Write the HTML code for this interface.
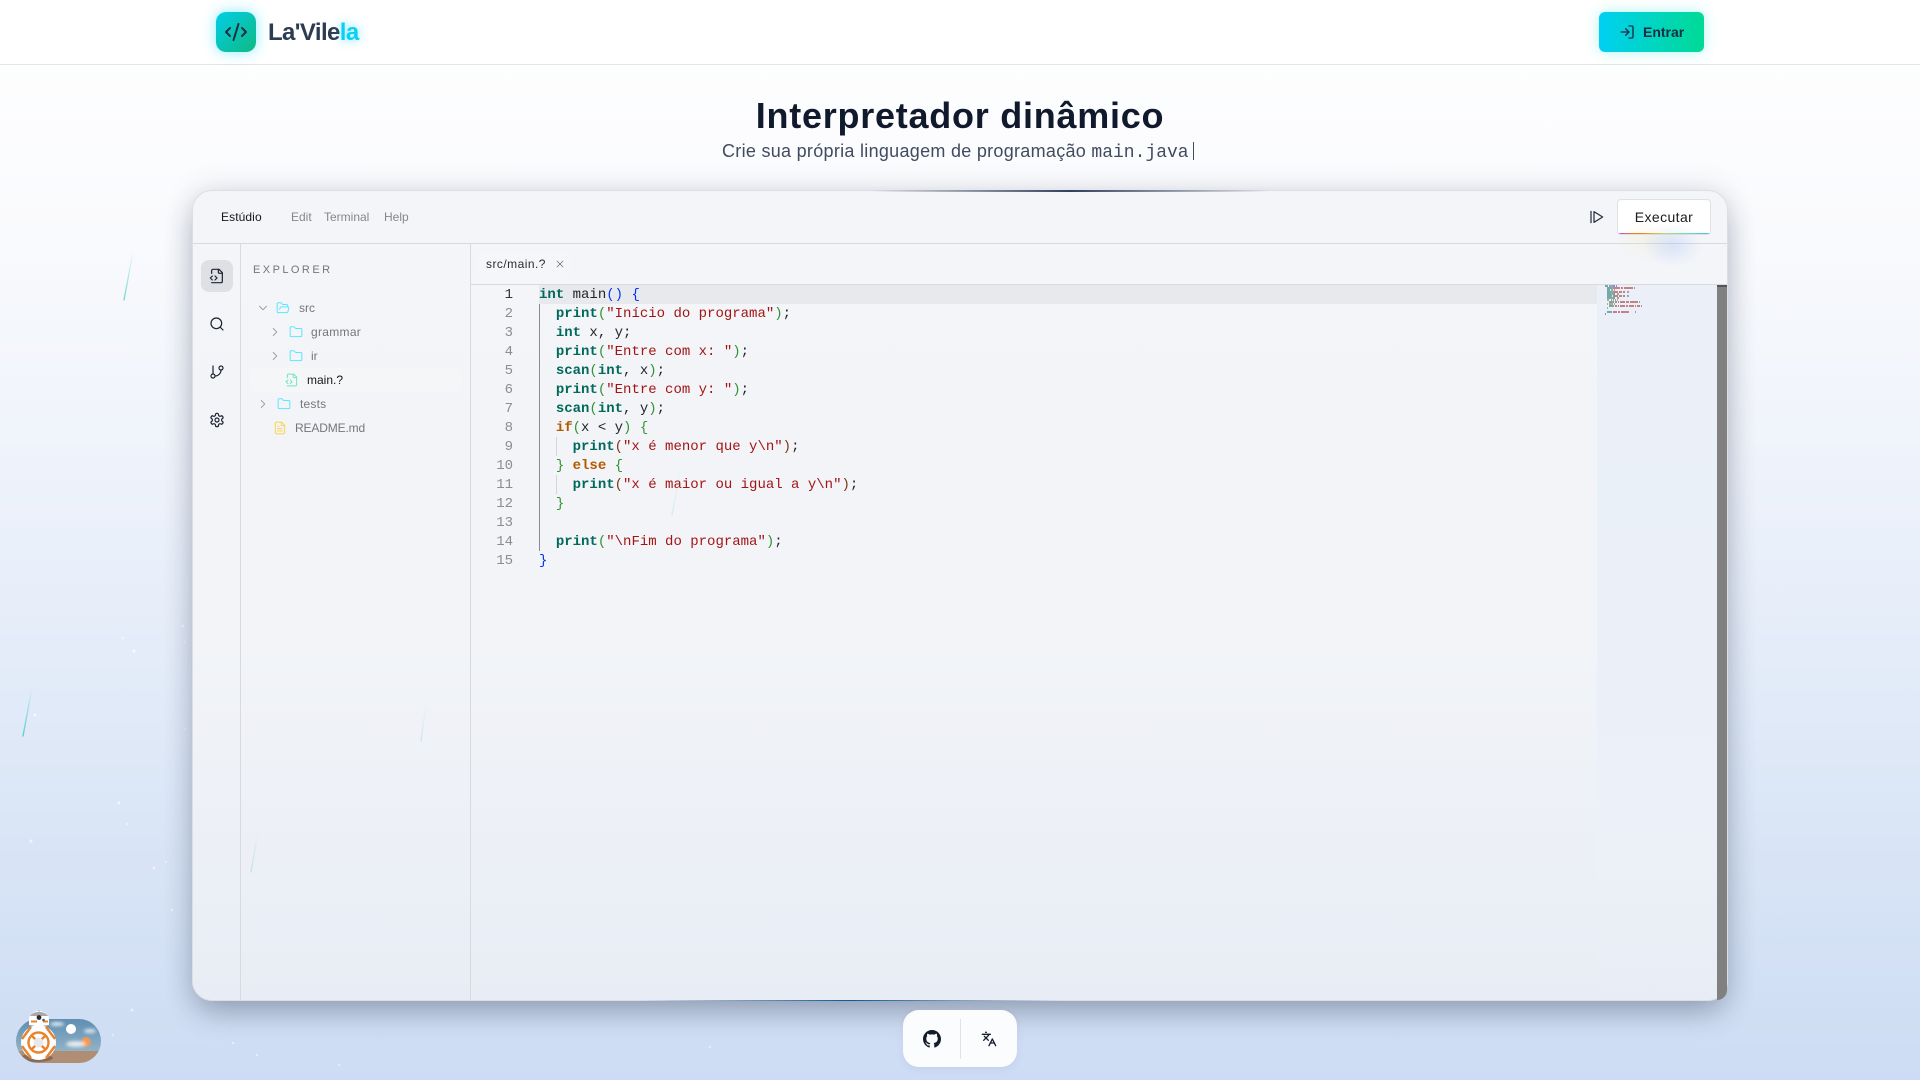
<!DOCTYPE html>
<html lang="pt-BR">
<head>
<meta charset="utf-8">
<title>La'Vilela</title>
<style>
*{box-sizing:border-box}
html,body{margin:0;padding:0;width:1920px;height:1080px;overflow:hidden}
body{position:relative;font-family:"Liberation Sans",sans-serif;background:linear-gradient(180deg,#fff 0%,#f9fafd 22%,#f0f4fb 40%,#e5edf9 58%,#d9e5f6 78%,#cddcf4 100%)}
.a{position:absolute}
svg.i{position:absolute;fill:none;stroke:currentColor;stroke-width:2;stroke-linecap:round;stroke-linejoin:round}
header{position:absolute;left:0;top:0;width:1920px;height:65px;background:rgba(255,255,255,.7);border-bottom:1px solid #e3e5e8}
.logo{left:216px;top:12px;width:40px;height:40px;border-radius:10px;background:linear-gradient(135deg,#00cfe8,#10b981);box-shadow:0 0 14px rgba(0,212,255,.45)}
.brand{left:268px;top:18px;font-size:24px;line-height:30px;font-weight:700;letter-spacing:-.6px;color:#2d3b53}
.brand span{color:#0ccff5;text-shadow:0 0 10px rgba(0,212,255,.6)}
.entrar{left:1599px;top:12px;width:105px;height:40px;border-radius:6px;background:linear-gradient(90deg,#00d0f2,#00da94);box-shadow:0 0 14px rgba(0,220,220,.3)}
.entrar b{position:absolute;left:44px;top:11px;font-size:14px;line-height:18px;color:#1e2b40}
h1{position:absolute;left:0;top:93px;width:1920px;margin:0;text-align:center;font-size:36px;line-height:46px;font-weight:700;color:#111a2c;letter-spacing:.75px}
.sub{position:absolute;left:722px;top:140px;font-size:18px;line-height:22px;color:#414b60;white-space:pre}
.sub span{letter-spacing:.29px}
.sub code{font-family:"Liberation Mono",monospace;font-size:18px;color:#414b60}
.sub i{position:absolute;left:471px;top:2px;width:1px;height:18px;background:#414b60}
.win{left:192px;top:190px;width:1536px;height:811px;border-radius:20px;border:1px solid #dcdee2;background:linear-gradient(180deg,#f4f5f8 0%,#f2f4f8 55%,#e8edf5 100%);box-shadow:0 14px 30px -4px rgba(20,30,50,.3),0 0 30px rgba(30,50,90,.12);overflow:hidden}
.beam{position:absolute;height:1.5px;z-index:3}
.hl{position:absolute;left:0;top:52px;width:1535px;height:1px;background:#d8dade}
.m{position:absolute;font-size:12px;line-height:16px;color:#84878c;top:18px}
.run{left:1617px;top:199px;width:94px;height:36px;border-radius:4px;background:#fff;border:1px solid #e0e1e4;color:#1a1b1f;font-size:14px;line-height:34px;text-align:center;letter-spacing:.4px;overflow:hidden}
.run u{position:absolute;left:0;right:0;bottom:0;height:1.5px;background:linear-gradient(90deg,#a855f7,#f97316 16%,#f97316 26%,#c9d96f 50%,#6ee7a0 75%,#38bdf8);}
.glow{left:1615px;top:215px;width:115px;height:60px;background:radial-gradient(ellipse 30px 22px at 50% 50%,rgba(110,160,250,.2),transparent),radial-gradient(ellipse 30px 22px at 28% 40%,rgba(240,220,140,.14),transparent);pointer-events:none}
.vl{position:absolute;width:1px;background:#d8dade}
.act{left:201px;top:260px;width:32px;height:32px;border-radius:8px;background:#dfe0e3}
.t{position:absolute;font-size:12px;line-height:16px;color:#73767b;white-space:pre}
.row{left:250px;top:368px;width:211px;height:24px;border-radius:6px;background:rgba(255,255,255,.1)}
.ln{position:absolute;left:480px;width:33px;text-align:right;font:14px/19px "Liberation Mono",monospace;color:#8b8d90}
.c{position:absolute;left:539px;font:14px/19px "Liberation Mono",monospace;color:#1f2328;white-space:pre}
.k{color:#00695c;font-weight:700}
.o{color:#b35a00;font-weight:700}
.s{color:#a31515}
.b{color:#0431fa}
.g{color:#319331}
.r{color:#7b3814}
.dock{left:903px;top:1010px;width:114px;height:57px;border-radius:16px;background:#fbfcfe;box-shadow:0 2px 8px rgba(60,80,120,.08)}
</style>
</head>
<body>

<!-- stars -->
<svg class="a" style="left:0;top:0;opacity:.75" width="1920" height="1080" fill="#fff">
<circle cx="183" cy="626" r="1.4" opacity=".8"/><circle cx="134" cy="651" r="1.5"/><circle cx="123" cy="638" r="1.3" opacity=".5"/><circle cx="35" cy="715" r="1.4" opacity=".9"/><circle cx="119" cy="803" r="1.4" opacity=".9"/><circle cx="127" cy="824" r="1.2" opacity=".7"/><circle cx="31" cy="841" r="1.4" opacity=".9"/><circle cx="154" cy="868" r="1.3" opacity=".8"/><circle cx="166" cy="862" r="1.3" opacity=".5"/><circle cx="172" cy="910" r="1.3" opacity=".6"/><circle cx="185" cy="642" r="1.2" opacity=".5"/><circle cx="185" cy="729" r="1.2" opacity=".5"/><circle cx="132" cy="1010" r="1.3" opacity=".8"/><circle cx="113" cy="1035" r="1.2" opacity=".5"/><circle cx="710" cy="1047" r="1.2" opacity=".6"/><circle cx="233" cy="1043" r="1.2" opacity=".6"/><circle cx="257" cy="1055" r="1.2" opacity=".6"/><circle cx="339" cy="1065" r="1.2" opacity=".6"/><circle cx="112" cy="178" r="1.2" opacity=".7"/><circle cx="29" cy="296" r="1.2" opacity=".7"/><circle cx="138" cy="187" r="1.2" opacity=".5"/><circle cx="1545" cy="125" r="1.2" opacity=".5"/>
</svg>

<header></header>
<div class="a logo"></div>
<svg class="i" style="left:224px;top:20px;color:#1e2b40" width="24" height="24" viewBox="0 0 24 24"><path d="m18 16 4-4-4-4"/><path d="m6 8-4 4 4 4"/><path d="m14.5 4-5 16"/></svg>
<div class="a brand">La'Vile<span>la</span></div>
<div class="a entrar"><svg class="i" style="left:20px;top:12px;color:#1e2b40" width="16" height="16" viewBox="0 0 24 24"><path d="M15 3h4a2 2 0 0 1 2 2v14a2 2 0 0 1-2 2h-4"/><path d="m10 17 5-5-5-5"/><path d="M15 12H3"/></svg><b>Entrar</b></div>

<h1>Interpretador dinâmico</h1>
<div class="sub"><span>Crie sua própria linguagem de programação </span><code>main.java</code><i></i></div>

<div class="a win">
  <div class="hl"></div>
  <div class="hl" style="top:93px;left:278px;width:1257px"></div>
  <div class="vl" style="left:47px;top:52px;height:760px"></div>
  <div class="vl" style="left:277px;top:52px;height:760px"></div>
  <div class="m" style="left:28px;color:#16171a;letter-spacing:.1px">Estúdio</div>
  <div class="m" style="left:98px">Edit</div>
  <div class="m" style="left:131px">Terminal</div>
  <div class="m" style="left:191px">Help</div>
</div>
<div class="beam" style="left:870px;top:190px;width:400px;background:linear-gradient(90deg,rgba(50,65,90,0),#32415a 50%,rgba(50,65,90,0))"></div>
<div class="beam" style="left:640px;top:999.5px;width:420px;background:linear-gradient(90deg,rgba(10,90,140,0),#0d5c8f 50%,rgba(10,90,140,0))"></div>

<!-- toolbar -->
<svg class="i" style="left:1588px;top:209px;color:#2a3344;stroke-width:1.9" width="16" height="16" viewBox="0 0 24 24"><path d="M4.5 3.5v17"/><path d="M9 4v16l13-8z"/></svg>
<div class="a run">Executar<u></u></div>
<div class="a glow"></div>

<!-- activity bar -->
<div class="a act"></div>
<svg class="i" style="left:209px;top:268px;color:#1c2230;stroke-width:1.8" width="16" height="16" viewBox="0 0 24 24"><path d="M4 22h14a2 2 0 0 0 2-2V7l-5-5H6a2 2 0 0 0-2 2v4"/><path d="M14 2v4a2 2 0 0 0 2 2h4"/><path d="m5 12-3 3 3 3"/><path d="m9 18 3-3-3-3"/></svg>
<svg class="i" style="left:209px;top:316px;color:#1c2230;stroke-width:1.8" width="16" height="16" viewBox="0 0 24 24"><circle cx="11" cy="11" r="8"/><path d="m21 21-4.3-4.3"/></svg>
<svg class="i" style="left:209px;top:364px;color:#1c2230;stroke-width:1.8" width="16" height="16" viewBox="0 0 24 24"><path d="M6 3v12"/><circle cx="18" cy="6" r="3"/><circle cx="6" cy="18" r="3"/><path d="M18 9a9 9 0 0 1-9 9"/></svg>
<svg class="i" style="left:209px;top:412px;color:#1c2230;stroke-width:1.8" width="16" height="16" viewBox="0 0 24 24"><path d="M12.22 2h-.44a2 2 0 0 0-2 2v.18a2 2 0 0 1-1 1.73l-.43.25a2 2 0 0 1-2 0l-.15-.08a2 2 0 0 0-2.73.73l-.22.38a2 2 0 0 0 .73 2.73l.15.1a2 2 0 0 1 1 1.72v.51a2 2 0 0 1-1 1.74l-.15.09a2 2 0 0 0-.73 2.73l.22.38a2 2 0 0 0 2.73.73l.15-.08a2 2 0 0 1 2 0l.43.25a2 2 0 0 1 1 1.73V20a2 2 0 0 0 2 2h.44a2 2 0 0 0 2-2v-.18a2 2 0 0 1 1-1.73l.43-.25a2 2 0 0 1 2 0l.15.08a2 2 0 0 0 2.73-.73l.22-.39a2 2 0 0 0-.73-2.73l-.15-.08a2 2 0 0 1-1-1.74v-.5a2 2 0 0 1 1-1.74l.15-.09a2 2 0 0 0 .73-2.73l-.22-.38a2 2 0 0 0-2.73-.73l-.15.08a2 2 0 0 1-2 0l-.43-.25a2 2 0 0 1-1-1.73V4a2 2 0 0 0-2-2z"/><circle cx="12" cy="12" r="3"/></svg>

<!-- explorer -->
<div class="t" style="left:253px;top:262px;font-size:11px;letter-spacing:2.45px">EXPLORER</div>
<div class="a row"></div>
<svg class="i" style="left:256px;top:301px;color:#9a9da2;stroke-width:1.6" width="14" height="14" viewBox="0 0 24 24"><path d="m6 9 6 6 6-6"/></svg>
<svg class="i" style="left:276px;top:301px;color:#5ce5ff;stroke-width:1.7" width="14" height="14" viewBox="0 0 24 24"><path d="m6 14 1.5-2.9A2 2 0 0 1 9.24 10H20a2 2 0 0 1 1.94 2.5l-1.54 6a2 2 0 0 1-1.95 1.5H4a2 2 0 0 1-2-2V5a2 2 0 0 1 2-2h3.9a2 2 0 0 1 1.69.9l.81 1.2a2 2 0 0 0 1.67.9H18a2 2 0 0 1 2 2v2"/></svg>
<div class="t" style="left:299px;top:300px">src</div>
<svg class="i" style="left:268px;top:325px;color:#9a9da2;stroke-width:1.6" width="14" height="14" viewBox="0 0 24 24"><path d="m9 18 6-6-6-6"/></svg>
<svg class="i" style="left:289px;top:325px;color:#5ce5ff;stroke-width:1.7" width="14" height="14" viewBox="0 0 24 24"><path d="M20 20a2 2 0 0 0 2-2V8a2 2 0 0 0-2-2h-7.9a2 2 0 0 1-1.69-.9L9.6 3.9A2 2 0 0 0 7.93 3H4a2 2 0 0 0-2 2v13a2 2 0 0 0 2 2Z"/></svg>
<div class="t" style="left:311px;top:324px;letter-spacing:.3px">grammar</div>
<svg class="i" style="left:268px;top:349px;color:#9a9da2;stroke-width:1.6" width="14" height="14" viewBox="0 0 24 24"><path d="m9 18 6-6-6-6"/></svg>
<svg class="i" style="left:289px;top:349px;color:#5ce5ff;stroke-width:1.7" width="14" height="14" viewBox="0 0 24 24"><path d="M20 20a2 2 0 0 0 2-2V8a2 2 0 0 0-2-2h-7.9a2 2 0 0 1-1.69-.9L9.6 3.9A2 2 0 0 0 7.93 3H4a2 2 0 0 0-2 2v13a2 2 0 0 0 2 2Z"/></svg>
<div class="t" style="left:311px;top:348px">ir</div>
<svg class="i" style="left:285px;top:373px;color:#6ee7b7;stroke-width:1.7" width="14" height="14" viewBox="0 0 24 24"><path d="M4 22h14a2 2 0 0 0 2-2V7l-5-5H6a2 2 0 0 0-2 2v4"/><path d="M14 2v4a2 2 0 0 0 2 2h4"/><path d="m5 12-3 3 3 3"/><path d="m9 18 3-3-3-3"/></svg>
<div class="t" style="left:307px;top:372px;color:#17181b">main.?</div>
<svg class="i" style="left:256px;top:397px;color:#9a9da2;stroke-width:1.6" width="14" height="14" viewBox="0 0 24 24"><path d="m9 18 6-6-6-6"/></svg>
<svg class="i" style="left:277px;top:397px;color:#5ce5ff;stroke-width:1.7" width="14" height="14" viewBox="0 0 24 24"><path d="M20 20a2 2 0 0 0 2-2V8a2 2 0 0 0-2-2h-7.9a2 2 0 0 1-1.69-.9L9.6 3.9A2 2 0 0 0 7.93 3H4a2 2 0 0 0-2 2v13a2 2 0 0 0 2 2Z"/></svg>
<div class="t" style="left:300px;top:396px;letter-spacing:.2px">tests</div>
<svg class="i" style="left:273px;top:421px;color:#fcd34d;stroke-width:1.7" width="14" height="14" viewBox="0 0 24 24"><path d="M15 2H6a2 2 0 0 0-2 2v16a2 2 0 0 0 2 2h12a2 2 0 0 0 2-2V7Z"/><path d="M14 2v4a2 2 0 0 0 2 2h4"/><path d="M10 9H8"/><path d="M16 13H8"/><path d="M16 17H8"/></svg>
<div class="t" style="left:295px;top:420px;letter-spacing:-.15px">README.md</div>

<!-- tab -->
<div class="a" style="left:478px;top:250px;width:92px;height:30px;border-radius:8px;background:rgba(255,255,255,.15)"></div>
<div class="t" style="left:486px;top:256px;color:#2a2c30;letter-spacing:.45px">src/main.?</div>
<svg class="i" style="left:554px;top:258px;color:#6b6e73;stroke-width:1.5" width="12" height="12" viewBox="0 0 24 24"><path d="M18 6 6 18"/><path d="m6 6 12 12"/></svg>

<!-- editor -->
<div class="a" style="left:539px;top:285px;width:1058px;height:19px;background:#e8e9ec"></div>
<div class="a" style="left:1597px;top:285px;width:120px;height:715px;background:linear-gradient(180deg,#eaeff8 0%,#ebf0f8 60%,rgba(235,240,248,0) 100%)"></div>
<div class="a" style="left:1717px;top:285px;width:10px;height:2px;background:#555"></div>
<div class="a" style="left:1717px;top:287px;width:10px;height:713px;background:#808080;border-radius:0 0 10px 0"></div>
<div class="a" style="left:539px;top:304px;width:1px;height:247px;background:#8a8c90"></div>
<div class="a" style="left:556px;top:437px;width:1px;height:19px;background:#d3d5d9"></div>
<div class="a" style="left:556px;top:475px;width:1px;height:19px;background:#d3d5d9"></div>

<div class="ln" style="top:285.5px;color:#333">1</div>
<div class="ln" style="top:304.5px">2</div>
<div class="ln" style="top:323.5px">3</div>
<div class="ln" style="top:342.5px">4</div>
<div class="ln" style="top:361.5px">5</div>
<div class="ln" style="top:380.5px">6</div>
<div class="ln" style="top:399.5px">7</div>
<div class="ln" style="top:418.5px">8</div>
<div class="ln" style="top:437.5px">9</div>
<div class="ln" style="top:456.5px">10</div>
<div class="ln" style="top:475.5px">11</div>
<div class="ln" style="top:494.5px">12</div>
<div class="ln" style="top:513.5px">13</div>
<div class="ln" style="top:532.5px">14</div>
<div class="ln" style="top:551.5px">15</div>

<div class="c" style="top:285.5px"><span class="k">int</span> main<span class="b">()</span> <span class="b">{</span></div>
<div class="c" style="top:304.5px">  <span class="k">print</span><span class="g">(</span><span class="s">"Início do programa"</span><span class="g">)</span>;</div>
<div class="c" style="top:323.5px">  <span class="k">int</span> x, y;</div>
<div class="c" style="top:342.5px">  <span class="k">print</span><span class="g">(</span><span class="s">"Entre com x: "</span><span class="g">)</span>;</div>
<div class="c" style="top:361.5px">  <span class="k">scan</span><span class="g">(</span><span class="k">int</span>, x<span class="g">)</span>;</div>
<div class="c" style="top:380.5px">  <span class="k">print</span><span class="g">(</span><span class="s">"Entre com y: "</span><span class="g">)</span>;</div>
<div class="c" style="top:399.5px">  <span class="k">scan</span><span class="g">(</span><span class="k">int</span>, y<span class="g">)</span>;</div>
<div class="c" style="top:418.5px">  <span class="o">if</span><span class="g">(</span>x &lt; y<span class="g">)</span> <span class="g">{</span></div>
<div class="c" style="top:437.5px">    <span class="k">print</span><span class="r">(</span><span class="s">"x é menor que y\n"</span><span class="r">)</span>;</div>
<div class="c" style="top:456.5px">  <span class="g">}</span> <span class="o">else</span> <span class="g">{</span></div>
<div class="c" style="top:475.5px">    <span class="k">print</span><span class="r">(</span><span class="s">"x é maior ou igual a y\n"</span><span class="r">)</span>;</div>
<div class="c" style="top:494.5px">  <span class="g">}</span></div>
<div class="c" style="top:532.5px">  <span class="k">print</span><span class="g">(</span><span class="s">"\nFim do programa"</span><span class="g">)</span>;</div>
<div class="c" style="top:551.5px"><span class="b">}</span></div>

<!-- minimap -->
<svg class="a" style="left:1605px;top:285px;opacity:.5" width="44" height="32" fill="none" stroke-width="2">
<path stroke="#00695c" d="M0 1h3M2 3h5M2 5h3M2 7h5M2 9h4M7 9h3M2 11h5M2 13h4M7 13h3M4 17h5M4 21h5M2 27h5"/>
<path stroke="#a31515" d="M8 3h7M16 3h2M19 3h9M8 7h5M14 7h3M18 7h2M8 11h5M14 11h3M18 11h2M10 17h2M13 17h1M15 17h5M21 17h3M25 17h8M10 21h2M13 21h1M15 21h5M21 21h2M24 21h5M30 21h1M32 21h3M8 27h4M13 27h2M16 27h8"/>
<path stroke="#556" d="M4 1h4M6 5h2M9 5h1M29 3h1M22 7h2M12 9h2M22 11h2M12 13h2M6 15h1M8 15h1M10 15h1M34 17h1M36 21h1M30 27h1"/>
<path stroke="#b35a00" d="M2 15h2M4 19h4"/>
<path stroke="#319331" d="M2 19h1M9 19h1M2 23h1M7 3h1M7 7h1M6 9h1M6 13h1M12 15h1"/>
<path stroke="#0431fa" d="M8 1h2M11 1h1M0 29h1"/>
</svg>

<!-- dock -->
<div class="a dock"></div>
<div class="a" style="left:960px;top:1019px;width:1px;height:40px;background:#e0e2e6"></div>
<svg class="a" style="left:923px;top:1030px" width="18" height="18" viewBox="0 0 16 16" fill="#141c2c"><path d="M8 0C3.58 0 0 3.58 0 8c0 3.54 2.29 6.53 5.47 7.59.4.07.55-.17.55-.38 0-.19-.01-.82-.01-1.49-2.01.37-2.53-.49-2.69-.94-.09-.23-.48-.94-.82-1.13-.28-.15-.68-.52-.01-.53.63-.01 1.08.58 1.23.82.72 1.21 1.87.87 2.33.66.07-.52.28-.87.51-1.07-1.78-.2-3.64-.89-3.64-3.95 0-.87.31-1.59.82-2.15-.08-.2-.36-1.02.08-2.12 0 0 .67-.21 2.2.82.64-.18 1.32-.27 2-.27s1.36.09 2 .27c1.53-1.04 2.2-.82 2.2-.82.44 1.1.16 1.92.08 2.12.51.56.82 1.27.82 2.15 0 3.07-1.87 3.75-3.65 3.95.29.25.54.73.54 1.48 0 1.07-.01 1.93-.01 2.2 0 .21.15.46.55.38A8.013 8.013 0 0 0 16 8c0-4.42-3.58-8-8-8z"/></svg>
<svg class="i" style="left:981px;top:1031px;color:#141c2c;stroke-width:2" width="16" height="16" viewBox="0 0 24 24"><path d="m5 8 6 6"/><path d="m4 14 6-6 2-3"/><path d="M2 5h12"/><path d="M7 2h1"/><path d="m22 22-5-10-5 10"/><path d="M14 18h6"/></svg>

<!-- BB-8 toggle -->
<svg class="a" style="left:0;top:1000px" width="110" height="75" viewBox="0 0 110 75">
<defs>
<clipPath id="p"><rect x="16" y="19" width="85" height="44" rx="22"/></clipPath>
<linearGradient id="sky" x1="0" y1="0" x2="0" y2="1"><stop offset="0" stop-color="#5e8eb2"/><stop offset="1" stop-color="#a3bfd0"/></linearGradient>
<filter id="bl"><feGaussianBlur stdDeviation="1.6"/></filter>
<filter id="bs"><feGaussianBlur stdDeviation=".5"/></filter>
</defs>
<g clip-path="url(#p)">
<rect x="16" y="19" width="85" height="44" fill="url(#sky)"/>
<rect x="16" y="51" width="85" height="12" fill="#b08e74"/>
<circle cx="86" cy="42" r="5" fill="#ee9a5a" filter="url(#bs)"/>
<g fill="#f4f7fa" opacity=".85" filter="url(#bl)"><ellipse cx="76" cy="44" rx="10" ry="3"/><ellipse cx="57" cy="24" rx="7" ry="2"/><ellipse cx="90" cy="31" rx="6" ry="2"/></g>
<circle cx="71" cy="29" r="5" fill="#fff"/>
<ellipse cx="36" cy="58" rx="17" ry="4" fill="#7d6553" opacity=".8"/>
</g>
<circle cx="38.5" cy="42.5" r="17.5" fill="#fff"/>
<g fill="none" stroke="#e8832c" stroke-width="2.4">
<circle cx="38.5" cy="42.5" r="10"/>
<path d="M31 27l-9 12M46 27l9 12M31 58l-9-12M46 58l9-12"/>
<path d="M32 36l3.5 3.5M45 36l-3.5 3.5M32 49l3.5-3.5M45 49l-3.5-3.5"/>
</g>
<circle cx="38.5" cy="42.5" r="5" fill="#e8e8ea"/>
<path d="M29 25 v-6 a10 8 0 0 1 20 0 v6 a14 3 0 0 1 -20 0z" fill="#fff"/>
<path d="M31 21.5h6M43 21.5h5" stroke="#e8832c" stroke-width="2"/>
<path d="M30 16a9.5 6 0 0 1 18 0z" fill="#a9a9ad"/>
<circle cx="39" cy="17.5" r="2.4" fill="#2a2a2e"/><circle cx="43.5" cy="20" r="1.3" fill="#55555a"/>
<path d="M39 12v-2" stroke="#aaa" stroke-width=".8"/>
</svg>

<!-- meteors -->
<svg class="a" style="left:0;top:0;pointer-events:none" width="1920" height="1080" fill="none" stroke-linecap="round" stroke-width="1.3">
<defs>
<linearGradient id="m1" gradientUnits="userSpaceOnUse" x1="124" y1="300" x2="133" y2="252"><stop offset="0" stop-color="#2cc4b8" stop-opacity=".65"/><stop offset="1" stop-color="#2cc4b8" stop-opacity="0"/></linearGradient>
<linearGradient id="m2" gradientUnits="userSpaceOnUse" x1="23" y1="736" x2="32" y2="688"><stop offset="0" stop-color="#2cc4b8" stop-opacity=".75"/><stop offset="1" stop-color="#2cc4b8" stop-opacity="0"/></linearGradient>
<linearGradient id="m3" gradientUnits="userSpaceOnUse" x1="251" y1="872" x2="258" y2="832"><stop offset="0" stop-color="#2cc4b8" stop-opacity=".25"/><stop offset="1" stop-color="#2cc4b8" stop-opacity="0"/></linearGradient>
<linearGradient id="m4" gradientUnits="userSpaceOnUse" x1="421" y1="741" x2="426" y2="704"><stop offset="0" stop-color="#2cc4b8" stop-opacity=".2"/><stop offset="1" stop-color="#2cc4b8" stop-opacity="0"/></linearGradient>
<linearGradient id="m5" gradientUnits="userSpaceOnUse" x1="672" y1="515" x2="681" y2="467"><stop offset="0" stop-color="#2cc4b8" stop-opacity=".16"/><stop offset="1" stop-color="#2cc4b8" stop-opacity="0"/></linearGradient>
</defs>
<path stroke="url(#m1)" d="M124 300 133 252"/>
<path stroke="url(#m2)" d="M23 736 32 688"/>
<path stroke="url(#m3)" d="M251 872 258 832"/>
<path stroke="url(#m4)" d="M421 741 426 704"/>
<path stroke="url(#m5)" d="M672 515 681 467"/>
</svg>

</body>
</html>
